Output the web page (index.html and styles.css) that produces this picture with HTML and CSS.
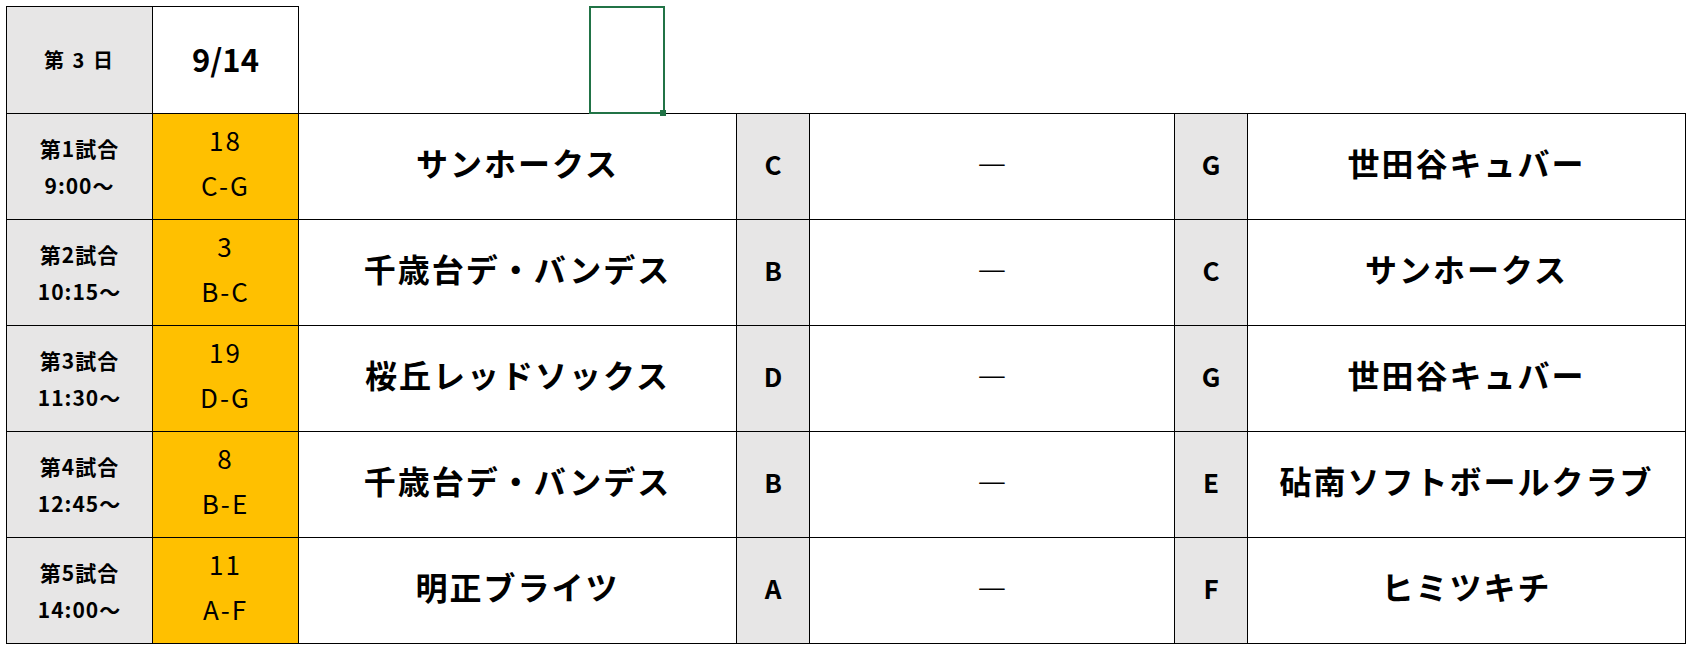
FILE: index.html
```html
<!DOCTYPE html>
<html lang="ja">
<head>
<meta charset="utf-8">
<title>第3日 9/14</title>
<link rel="stylesheet" href="styles.css">
</head>
<body>
<div class="sheet">
  <table class="schedule">
    <colgroup>
      <col class="c-game"><col class="c-no"><col class="c-team"><col class="c-letter"><col class="c-score"><col class="c-letter"><col class="c-team">
    </colgroup>
    <tr class="head">
      <td class="day">第 3 日</td>
      <td class="date">9/14</td>
      <td class="blank" colspan="5"></td>
    </tr>
    <tr>
      <td class="game"><span>第1試合</span><span>9:00～</span></td>
      <td class="no"><span>18</span><span>C-G</span></td>
      <td class="team">サンホークス</td>
      <td class="letter">C</td>
      <td class="score">—</td>
      <td class="letter">G</td>
      <td class="team">世田谷キュバー</td>
    </tr>
    <tr>
      <td class="game"><span>第2試合</span><span>10:15～</span></td>
      <td class="no"><span>3</span><span>B-C</span></td>
      <td class="team">千歳台デ・バンデス</td>
      <td class="letter">B</td>
      <td class="score">—</td>
      <td class="letter">C</td>
      <td class="team">サンホークス</td>
    </tr>
    <tr>
      <td class="game"><span>第3試合</span><span>11:30～</span></td>
      <td class="no"><span>19</span><span>D-G</span></td>
      <td class="team">桜丘レッドソックス</td>
      <td class="letter">D</td>
      <td class="score">—</td>
      <td class="letter">G</td>
      <td class="team">世田谷キュバー</td>
    </tr>
    <tr>
      <td class="game"><span>第4試合</span><span>12:45～</span></td>
      <td class="no"><span>8</span><span>B-E</span></td>
      <td class="team">千歳台デ・バンデス</td>
      <td class="letter">B</td>
      <td class="score">—</td>
      <td class="letter">E</td>
      <td class="team">砧南ソフトボールクラブ</td>
    </tr>
    <tr>
      <td class="game"><span>第5試合</span><span>14:00～</span></td>
      <td class="no"><span>11</span><span>A-F</span></td>
      <td class="team">明正ブライツ</td>
      <td class="letter">A</td>
      <td class="score">—</td>
      <td class="letter">F</td>
      <td class="team">ヒミツキチ</td>
    </tr>
  </table>
  <div class="cursor"><span class="handle"></span></div>
</div>
</body>
</html>
```

FILE: styles.css
```css
html, body {
  margin: 0;
  background: #ffffff;
}

body {
  font-family: "Noto Sans CJK JP", "Noto Sans", sans-serif;
  color: #000000;
}

.sheet {
  position: relative;
  padding: 6px 0 0 6px;
}

.schedule {
  border-collapse: collapse;
  table-layout: fixed;
  width: 1680px;
}

.c-game, .c-no { width: 146px; }
.c-team { width: 438px; }
.c-letter { width: 73px; }
.c-score { width: 365px; }

.schedule tr {
  height: 106px;
}

.schedule tr.head {
  height: 107px;
}

.schedule td {
  border: 1px solid #000000;
  padding: 0;
  text-align: center;
  vertical-align: middle;
  white-space: nowrap;
}

.schedule td.blank {
  border-style: none;
}

.day {
  background: #e7e6e6;
  font-size: 20px;
  font-weight: 700;
  letter-spacing: 2px;
  padding-bottom: 2px !important;
}

.date {
  font-size: 31px;
  font-weight: 700;
  padding-bottom: 4px !important;
}

.game {
  background: #e7e6e6;
  font-weight: 700;
  font-size: 21px;
  letter-spacing: 1px;
}

.game span, .no span {
  display: block;
}

.game span {
  line-height: 37px;
}

.no {
  background: #ffc000;
  font-size: 26px;
  font-weight: 400;
  letter-spacing: 2px;
  padding-bottom: 10px !important;
}

.no span {
  line-height: 45px;
}

.team {
  font-size: 32px;
  font-weight: 700;
  letter-spacing: 2px;
  padding-bottom: 9px !important;
}

.letter {
  background: #e7e6e6;
  font-size: 26px;
  font-weight: 700;
  padding-bottom: 7px !important;
}

.score {
  font-size: 32px;
  font-weight: 300;
  padding-bottom: 13px !important;
}

.cursor {
  position: absolute;
  left: 589px;
  top: 6px;
  width: 76px;
  height: 108px;
  box-sizing: border-box;
  border: 2px solid #217346;
}

.handle {
  position: absolute;
  right: -3px;
  bottom: -4px;
  width: 6px;
  height: 6px;
  background: #217346;
}
```
